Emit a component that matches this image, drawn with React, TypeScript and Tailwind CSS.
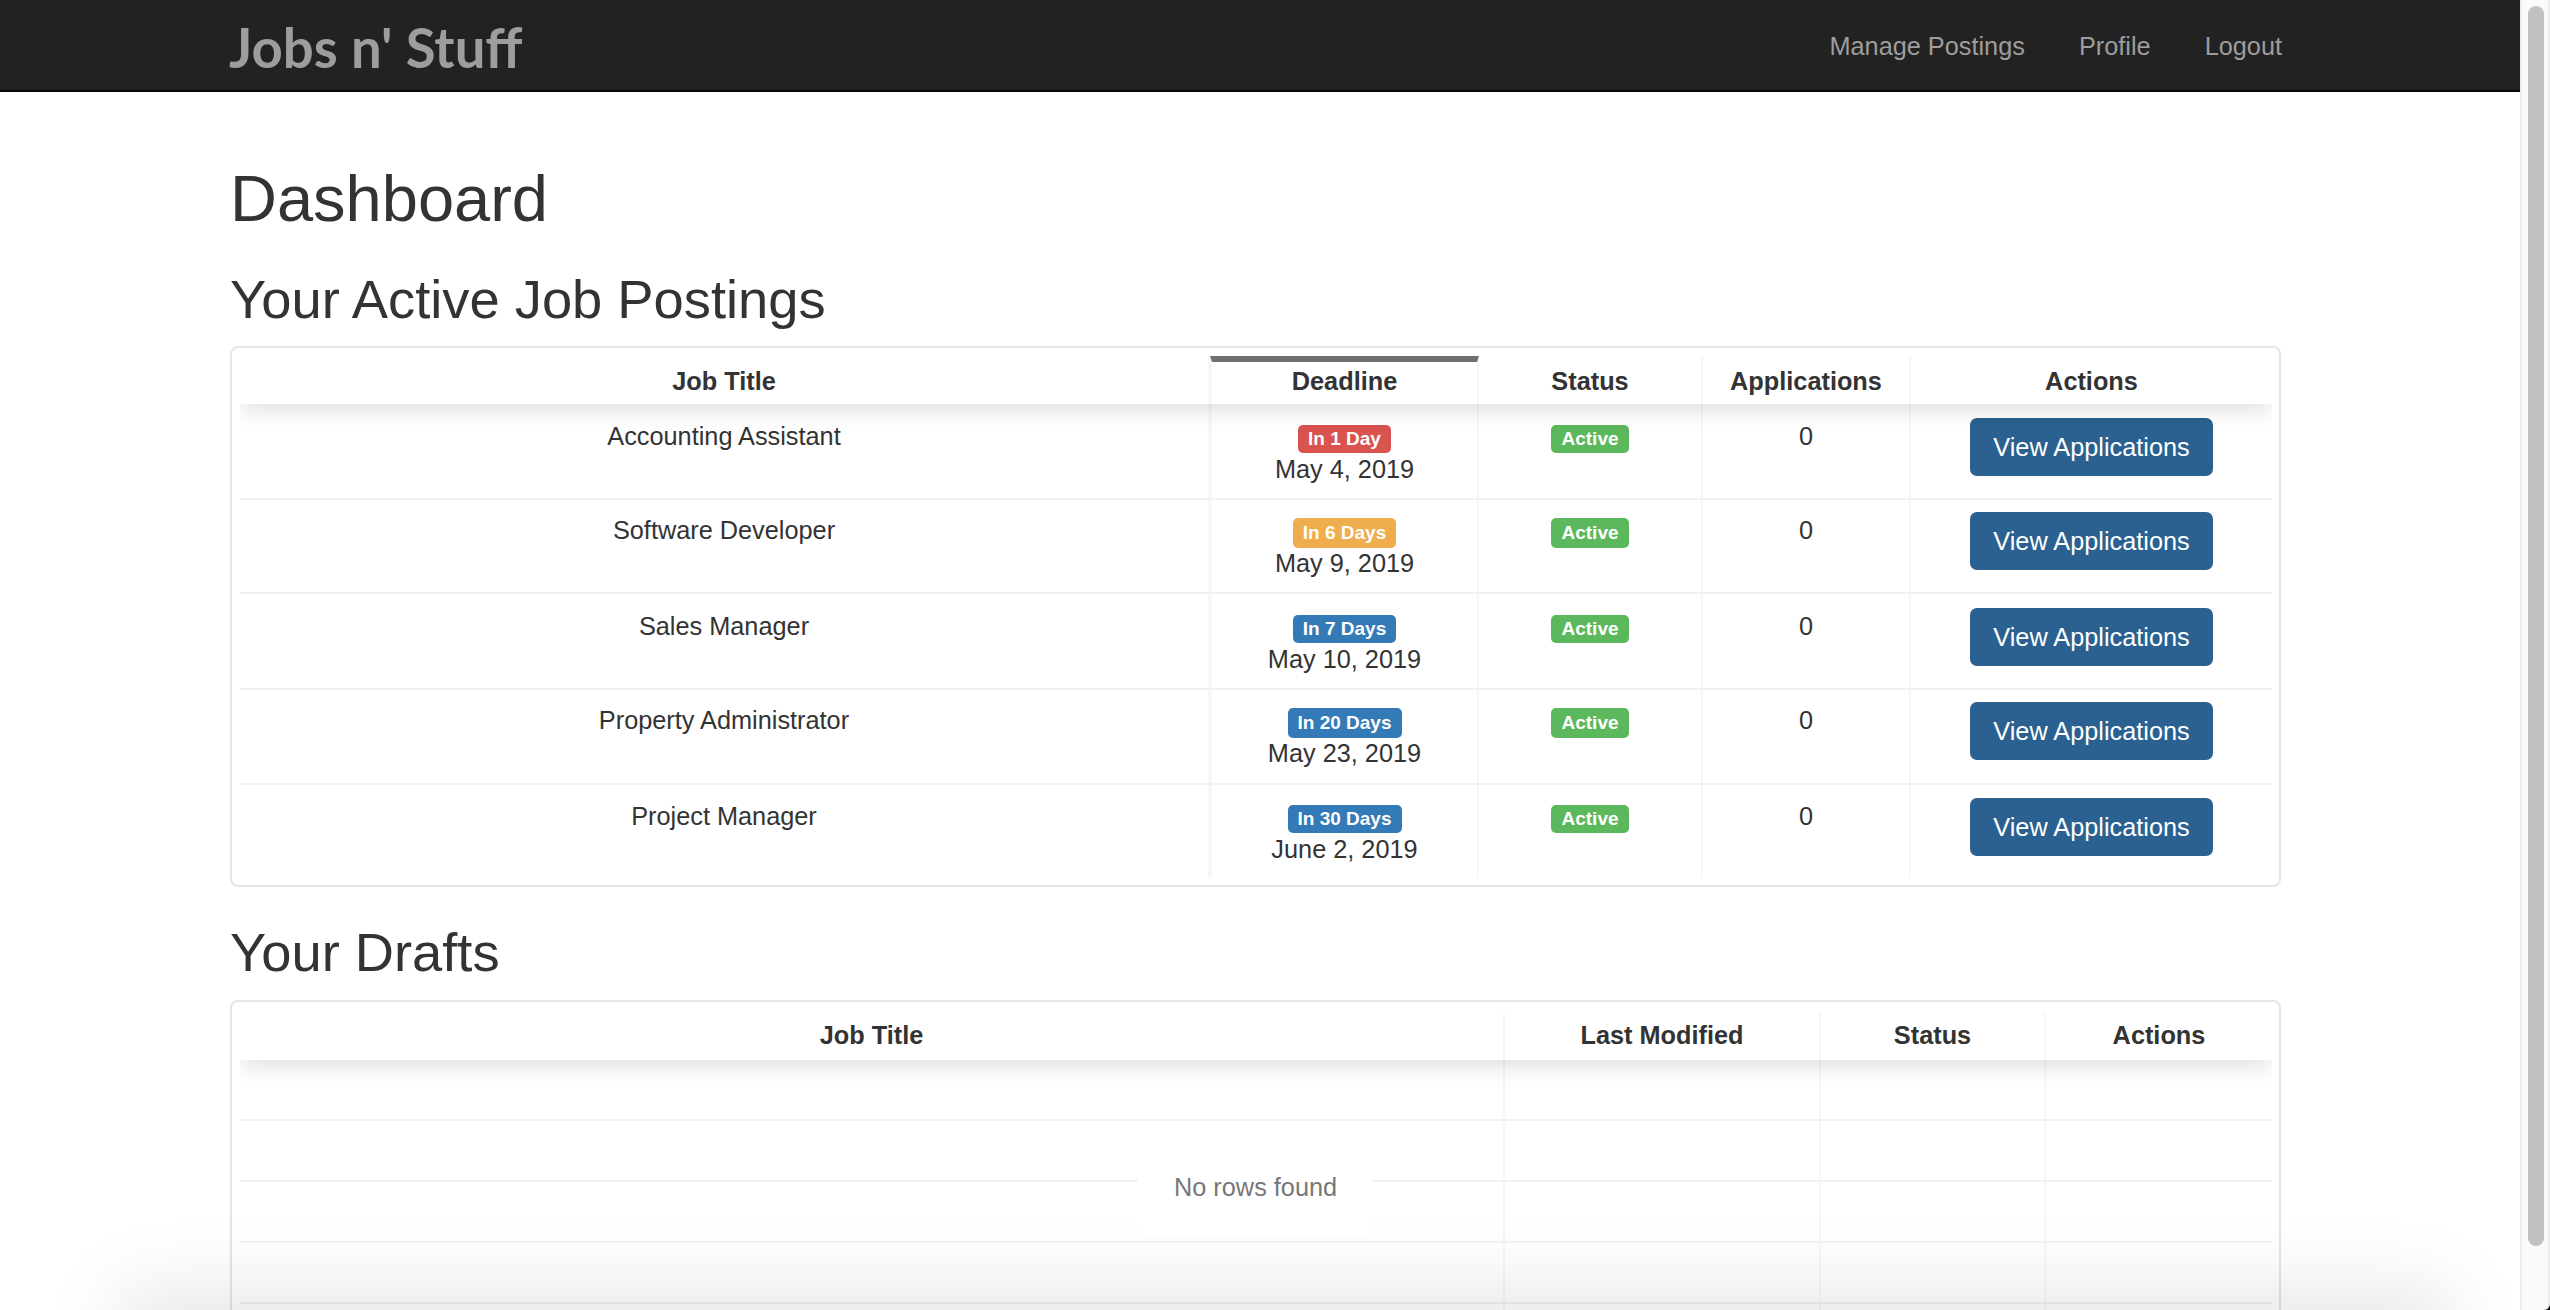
const SANS = "font-['Liberation_Sans',Arial,sans-serif]";

type Job = {
  title: string;
  due: string;
  dueColor: string;
  date: string;
  height: string;
  badge: string;
  pad: string;
};

const SHORT = 'h-[28px] leading-[28px]';
const TALL = 'h-[30px] leading-[29px]';

const jobs: Job[] = [
  { title: 'Accounting Assistant', due: 'In 1 Day', dueColor: 'bg-[#d9534f]', date: 'May 4, 2019', height: 'h-[96px]', badge: SHORT, pad: 'pt-[14px]' },
  { title: 'Software Developer', due: 'In 6 Days', dueColor: 'bg-[#f0ad4e]', date: 'May 9, 2019', height: 'h-[94px]', badge: TALL, pad: 'pt-[12px]' },
  { title: 'Sales Manager', due: 'In 7 Days', dueColor: 'bg-[#337ab7]', date: 'May 10, 2019', height: 'h-[96px]', badge: SHORT, pad: 'pt-[14px]' },
  { title: 'Property Administrator', due: 'In 20 Days', dueColor: 'bg-[#337ab7]', date: 'May 23, 2019', height: 'h-[95px]', badge: TALL, pad: 'pt-[12px]' },
  { title: 'Project Manager', due: 'In 30 Days', dueColor: 'bg-[#337ab7]', date: 'June 2, 2019', height: 'h-[95px]', badge: SHORT, pad: 'pt-[13px]' },
];

const Label = ({ color, size, children }: { color: string; size: string; children: React.ReactNode }) => (
  <span className={`inline-block rounded-[5px] px-[10px] text-[19px] font-bold text-white ${size} ${color}`}>
    {children}
  </span>
);

const activeCols = 'grid grid-cols-[970px_269px_224px_208px_361px]';
const draftCols = 'grid grid-cols-[1265px_316px_225px_226px]';
const cell = 'border-r-2 border-[#f7f7f7] text-center last:border-r-0';

export default function App() {
  return (
    <div className={`flex h-screen overflow-hidden bg-black text-[25.3px] leading-[36px] text-[#333] ${SANS}`}>
      <div className="relative min-w-0 flex-1 overflow-hidden bg-white">
        <nav className="h-[92px] border-b-2 border-[#080808] bg-[#222]">
          <div className="ml-[229px] flex h-full w-[2053px] items-start justify-between">
            <a className="mt-[11px] font-['Lato',sans-serif] text-[54.5px] font-bold leading-[72px] text-[#9d9d9d]">Jobs n' Stuff</a>
            <ul className="mt-[28px] flex gap-[54px] text-[#9d9d9d]">
              <li>Manage Postings</li>
              <li>Profile</li>
              <li>Logout</li>
            </ul>
          </div>
        </nav>

        <main className="ml-[230px] w-[2051px]">
          <h1 className="mt-[72px] text-[65px] leading-[70px]">Dashboard</h1>
          <h2 className="mt-[37px] text-[54.3px] leading-[58px]">Your Active Job Postings</h2>

          <section className="mt-[17px] h-[541px] rounded-[8px] border-2 border-[#e5e5e5] pt-[8px] pb-[7px] pl-[8px] pr-[7px]">
            <div className="h-full overflow-hidden">
              <div className={`${activeCols} relative z-10 h-[48px] bg-white font-bold shadow-[0_4px_26px_0_rgba(0,0,0,0.15)]`}>
                <div className={`${cell} pt-[7px]`}>Job Title</div>
                <div className={`${cell} border-l-2 border-t-[6px] border-t-[#6f6f6f] pt-[1px]`}>Deadline</div>
                <div className={`${cell} pt-[7px]`}>Status</div>
                <div className={`${cell} pt-[7px]`}>Applications</div>
                <div className={`${cell} pt-[7px]`}>Actions</div>
              </div>
              {jobs.map((job) => (
                <div key={job.title} className={`${activeCols} ${job.height} border-b-2 border-[#f2f2f2] last:border-b-0`}>
                  <div className={`${cell} ${job.pad}`}>{job.title}</div>
                  <div className={`${cell} border-l-2 ${job.pad}`}>
                    <Label color={job.dueColor} size={job.badge}>{job.due}</Label>
                    <div className="-mt-[3px]">{job.date}</div>
                  </div>
                  <div className={`${cell} ${job.pad}`}>
                    <Label color="bg-[#5cb85c]" size={job.badge}>Active</Label>
                  </div>
                  <div className={`${cell} ${job.pad}`}>0</div>
                  <div className={`${cell} ${job.pad}`}>
                    <button className="h-[58px] w-[243px] rounded-[7px] bg-[#2a6190] text-white">View Applications</button>
                  </div>
                </div>
              ))}
            </div>
          </section>

          <h2 className="mt-[37px] text-[54.3px] leading-[58px]">Your Drafts</h2>

          <section className="relative mt-[18px] h-[400px] rounded-[8px] border-2 border-[#e5e5e5] pt-[10px] pl-[8px] pr-[7px]">
            <div className="h-full overflow-hidden">
              <div className={`${draftCols} relative z-10 h-[48px] bg-white font-bold shadow-[0_4px_26px_0_rgba(0,0,0,0.15)]`}>
                <div className={`${cell} pt-[5px]`}>Job Title</div>
                <div className={`${cell} pt-[5px]`}>Last Modified</div>
                <div className={`${cell} pt-[5px]`}>Status</div>
                <div className={`${cell} pt-[5px]`}>Actions</div>
              </div>
              {[0, 1, 2, 3, 4].map((row) => (
                <div key={row} className={`${draftCols} h-[61px] border-b-2 border-[#f2f2f2]`}>
                  <div className={cell} />
                  <div className={cell} />
                  <div className={cell} />
                  <div className={cell} />
                </div>
              ))}
            </div>
            <div className="absolute left-[906px] top-[137px] z-20 bg-white px-[36px] py-[30px] text-[#777]">No rows found</div>
          </section>
        </main>

        <div className="absolute left-[140px] right-[90px] top-full h-[60px] shadow-[0_0_80px_20px_rgba(0,0,0,0.1)]" />
      </div>

      <aside className="w-[30px] shrink-0 rounded-br-[6px] border-x-2 border-x-[#ececec] bg-[#fafafa] pl-[6px] pt-[6px]">
        <div className="h-[1240px] w-[16px] rounded-full bg-[#c1c1c1]" />
      </aside>
    </div>
  );
}
